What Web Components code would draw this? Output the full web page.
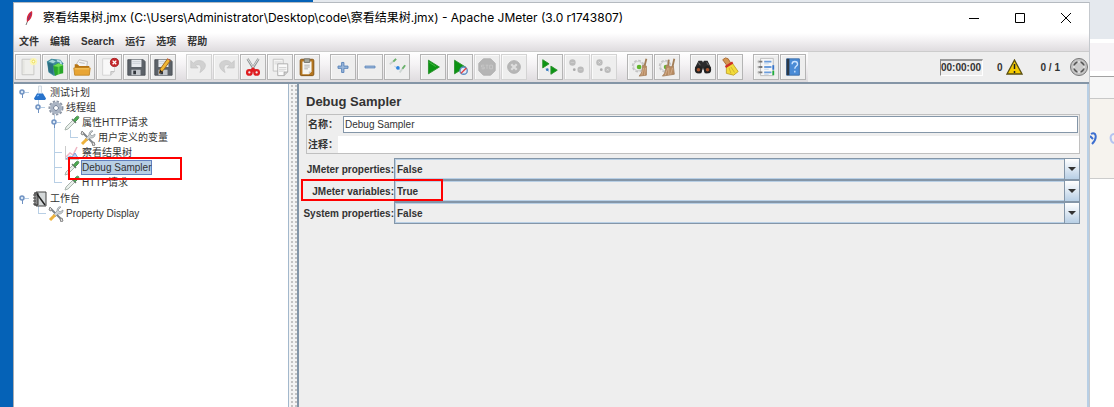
<!DOCTYPE html>
<html lang="zh-CN">
<head>
<meta charset="UTF-8">
<title>Apache JMeter</title>
<style>
  html, body { margin: 0; }
  body {
    font-family: "Liberation Sans", "Noto Sans CJK SC", sans-serif;
    font-size: 10px;
    line-height: 15px;
    color: #333;
    background: #fff;
  }
</style>
</head>
<body>
<desktop-view>
  <app-window heading="察看结果树.jmx (C:\Users\Administrator\Desktop\code\察看结果树.jmx) - Apache JMeter (3.0 r1743807)">
    <menu-bar items="文件,编辑,Search,运行,选项,帮助"></menu-bar>
    <tool-bar></tool-bar>
    <split-pane>
      <div slot="left">
        <tree-node label="测试计划" icon="flask" open root>
          <tree-node label="线程组" icon="gear" open>
            <tree-node label="属性HTTP请求" icon="pipette" open>
              <tree-node label="用户定义的变量" icon="tools"></tree-node>
            </tree-node>
            <tree-node label="察看结果树" icon="chart"></tree-node>
            <tree-node label="Debug Sampler" icon="pipette" selected></tree-node>
            <tree-node label="HTTP请求" icon="pipette"></tree-node>
          </tree-node>
        </tree-node>
        <tree-node label="工作台" icon="bench" open root>
          <tree-node label="Property Display" icon="tools"></tree-node>
        </tree-node>
      </div>
      <sampler-form></sampler-form>
    </split-pane>
  </app-window>
  <back-window slot="behind"></back-window>
</desktop-view>

<script>
  const cog = '<circle cx="9" cy="10" r="6" fill="#e4e4e4" stroke="#c4c4c4" stroke-width="2" stroke-dasharray="3 1.6"/><circle cx="9" cy="10" r="5" fill="#eee" stroke="#ccc"/><circle cx="10" cy="11" r="2.6" fill="#61b52c"/>';
  const floppy = '<path d="M2 3h17l2 2v15H2z" fill="#5b6168" stroke="#4b5056"/><path d="M6 3h11v8H6z" fill="#e8ebef"/><path d="M7 5h9M7 7h9" stroke="#c9ced5"/><path d="M6 14h10v6H6z" fill="#c3c7cc"/><path d="M8 15h3v4H8z" fill="#30343a"/>';

  // toolbar icons, 22 x 22
  const toolIcons = {
    new: '<path d="M4.500 2.500h13v17h-13z" fill="#efefec" stroke="#c6c6c2"/><path d="M6.500 4v14" stroke="#dededa"/><circle cx="17" cy="5" r="4" fill="#fff7a8" opacity=".8"/><circle cx="17" cy="5" r="1.500" fill="#fffde0" stroke="#e8d953"/>',
    templates: '<path d="M2 5l5-3 10 1 3 4-2 9-8 5-6-4z" fill="#418b9c"/><path d="M3 6l6 2v11l-5-3z" fill="#2c6f82"/><path d="M4 5l4-2 4 2-3 2z" fill="#a7d6dc"/><path d="M13 4l4 1 1 4" fill="none" stroke="#b2dbe5" stroke-width="2"/><path d="M9 10l5-3 6 2v9l-5 1-4 2z" fill="#2aa62b"/><path d="M9 10l6 1 5-2-5-2z" fill="#72df52"/><path d="M15 11v8" stroke="#53cf45" stroke-width="2"/>',
    open: '<path d="M4 9L8 3l9 2-1 8H4z" fill="#f4f4f4" stroke="#bbb"/><path d="M8 6l6 1" stroke="#bbb"/><path d="M3 8h3l2 2h11v9H3z" fill="#b87513"/><path d="M2 12h18l-1 8H3z" fill="#e8a534" stroke="#c48a2a"/><path d="M3 13h16" stroke="#ffd370"/>',
    close: '<path d="M4 2h13v14l-4 4H4z" fill="#f8f8f8" stroke="#d2d2d2"/><path d="M13 20v-4h4" fill="#ddd" stroke="#bbb"/><circle cx="17" cy="6" r="4.500" fill="#c6262a" stroke="#a62224"/><path d="M15 4l4 4m0-4l-4 4" stroke="#fff" stroke-width="1.500"/>',
    save: floppy,
    saveas: floppy + '<path d="M7 18l1-5L16 2l3 2-8 11z" fill="#f2b734" stroke="#99631b"/><path d="M7 18l1-4 2 2z" fill="#222"/><path d="M16 2l3 2" stroke="#c55"/>',
    undo: '<path d="M2 4v8h8L7 9c5-2 8 1 5 8 9-5 7-13-1-13-3 0-5 1-6 3z" fill="#d1d1d1" stroke="#c8c8c8"/>',
    redo: '<path d="M20 4v8h-8l3-3c-5-2-8 1-5 8-9-5-7-13 1-13 3 0 5 1 6 3z" fill="#d1d1d1" stroke="#c8c8c8"/>',
    cut: '<path d="M5 2l8 13M17 2L9 15" stroke="#8d9292" stroke-width="2.600"/><path d="M5 2l8 12M17 2L9 14" stroke="#e4e8e8"/><circle cx="7" cy="17" r="2.500" fill="none" stroke="#df1d20" stroke-width="2.500"/><circle cx="15" cy="17" r="2.500" fill="none" stroke="#df1d20" stroke-width="2.500"/><path d="M8 14l3-3 3 3-3 3z" fill="#df1d20"/>',
    copy: '<path d="M3.500 2.500h11v13h-11z" fill="#f5f5f4" stroke="#c0c0c0"/><path d="M5 5.500h8M5 7.500h8" stroke="#d5d5d5"/><path d="M8.500 7.500h11v9l-4 4h-7z" fill="#fafafa" stroke="#aaa"/><path d="M10 11.500h8M10 13.500h8M10 15.500h6" stroke="#ccc"/><path d="M15.500 20.500v-4h4" fill="#ccc" stroke="#aaa"/>',
    paste: '<rect x="3.500" y="2.500" width="15" height="18" rx="1.500" fill="#b5761f" stroke="#80500f"/><path d="M6 5h10v11l-3 3H6z" fill="#f6f6f2"/><path d="M8 2h6v4H8z" fill="#a5a79d" stroke="#73736c"/><path d="M8 9h6M8 11h6M8 13h4" stroke="#aaa"/><path d="M13 19v-3h3" fill="#ccc"/>',
    plus: '<path d="M9.500 6v4h-4v2.500h4v4.500h2.500v-4.500h4.500v-2.500H12V6z" fill="#9ab7da" stroke="#5681b8"/>',
    minus: '<path d="M5.500 10h11v2h-11z" fill="#9ab7da" stroke="#6089bd"/>',
    toggle: '<path d="M3 8l7-6M14 17l5-7" stroke="#cdd5d2" stroke-width="2"/><path d="M7 5l3-3M17 13l3-4" stroke="#6ab26a" stroke-width="2"/><path d="M8 10l6 4" stroke="#9fc9ed"/><circle cx="12" cy="12" r="2" fill="#2c83df"/>',
    start: '<path d="M6 3.500l12 7.500-12 7.500z" fill="#0b9413" stroke="#2b912d"/><path d="M7 6l7 4.500" stroke="#45bd43"/>',
    startnow: '<path d="M5 3.500l12 7.500-12 7.500z" fill="#0b9413" stroke="#2b912d"/><circle cx="15" cy="15" r="4" fill="#e2ebf7" stroke="#5f8dc3" stroke-width="1.500"/><path d="M12 18l6-6" stroke="#e03a3a" stroke-width="1.500"/>',
    stop: '<path d="M7 2h8l5 5v8l-5 5H7l-5-5V7z" fill="#b5b5b5" stroke="#b0b0b0"/><path d="M5 9h3M5 9v2h3v2H5M9.500 9h3M11 9v4M14 9h3v4h-3z" fill="none" stroke="#c8c8c8"/>',
    shutdown: '<circle cx="11" cy="11" r="7" fill="#b6b6b6" stroke="#b0b0b0"/><path d="M8 8l6 6m0-6l-6 6" stroke="#ddd" stroke-width="2.500"/>',
    remotestart: '<path d="M3 3l7 4.500L3 12zM12 10l7 4.500-7 4.500z" fill="#0b9413" stroke="#2b912d"/><path d="M6 13l4 3" stroke="#84b6e3"/><circle cx="8" cy="14" r="1.500" fill="#397cc1"/>',
    remotestop: '<circle cx="6" cy="6" r="3.500" fill="#bbb"/><circle cx="15" cy="14" r="3.500" fill="#bbb"/><circle cx="8" cy="14" r="1.500" fill="#aaa"/><path d="M4 6h4M13 14h4" stroke="#ccc"/>',
    remoteshut: '<circle cx="6" cy="6" r="3.500" fill="#bbb"/><circle cx="15" cy="14" r="3.500" fill="#bbb"/><circle cx="8" cy="14" r="1.500" fill="#aaa"/><path d="M5 5l2 2m0-2L5 7M14 13l2 2m0-2l-2 2" stroke="#e1e1e1"/>',
    clear: cog + '<path d="M18 2l-2 8" stroke="#a17d56" stroke-width="2"/><path d="M14 9l4 1v10l-8 1c3-3 4-7 4-12z" fill="#b88b61" stroke="#a98561"/><path d="M15 12l-2 8m4-8l-1 8" stroke="#d4b08d"/>',
    clearall: cog + '<path d="M13 3l-1 8M19 2l-2 9" stroke="#a17d56" stroke-width="2"/><path d="M10 9l4 1 1 1 3-1 1 9-13 2c3-3 4-7 4-12z" fill="#b88b61" stroke="#a98561"/><path d="M12 12l-3 8m8-8l-2 7m-2-7v8" stroke="#d4b08d"/>',
    search: '<path d="M6 4h4l1 2 1-2h4l4 8-4 6h-3l-2-6-2 6H5l-3-6z" fill="#2b2b2c"/><circle cx="6" cy="14" r="3" fill="#a7532d" stroke="#222" stroke-width="2"/><circle cx="16" cy="14" r="3" fill="#a7532d" stroke="#222" stroke-width="2"/><path d="M6 6l2 3M15 6l2 3" stroke="#777"/>',
    reset: '<path d="M3 3l3-2 3 1 3 5-4 3z" fill="#d49752" stroke="#a9682e"/><path d="M7 10l6-4 7 10-5 4-8-2z" fill="#f2dc3b" stroke="#c1a12a"/><path d="M6 11l8-5" stroke="#cf3027" stroke-width="2.500"/><path d="M10 12l2 6m0-7l4 6" stroke="#cfb02c"/>',
    functions: '<path d="M5 1.500h14v19H5z" fill="#f7f7f7" stroke="#bbb"/><path d="M9 5h8M9 11h8M9 17h8" stroke="#6c9ddb" stroke-width="2"/><path d="M9 7.500h5M9 13.500h5M9 19h5" stroke="#bcd2e9"/><path d="M2 5h5M2 11h5M2 17h5" stroke="#777" stroke-width="2"/><path d="M3 4v3m0 3v3m0 3v3" stroke="#ccc"/><path d="M19 9v5" stroke="#3574cc" stroke-width="2"/><path d="M19 15v5" stroke="#20ac3b" stroke-width="2"/>',
    help: '<path d="M4 2h14v18H4z" fill="#4a8bd6" stroke="#3a6ca8"/><path d="M4 2h3v18H4z" fill="#2c3947"/><path d="M10 8c0-4 6-4 6 0 0 2-3 2-3 5m0 2v2" fill="none" stroke="#cce4ff" stroke-width="1.500"/>'
  };

  // tree icons, 16 x 16
  const treeIcons = {
    flask: '<path d="M6.500 1h3v6l4 7H2.500l4-7z" fill="#f3f7fb" stroke="#d0d9e2"/><path d="M5 8.500h6l3 5-1 1.500H3l-1-1.500z" fill="#2773cc"/><path d="M5 11l2-1" stroke="#8bc3ff"/>',
    gear: '<circle cx="8" cy="8" r="6.500" stroke="#8d96a5" stroke-width="2" stroke-dasharray="2.400 1.400"/><circle cx="8" cy="8" r="4.500" fill="#fff" stroke="#aab4c3" stroke-width="3"/><circle cx="8" cy="8" r="2.500" fill="#fff" stroke="#66758e"/>',
    pipette: '<path d="M1 15l1-3 7-7 2 2-7 7z" fill="#e9efeb" stroke="#a9b5ad"/><path d="M8 4l4 4" stroke="#6d7a72" stroke-width="1.500"/><path d="M9.500 5L12 2c2-2 4 0 2 2l-3 3z" fill="#4aad4f" stroke="#528a58"/>',
    tools: '<path d="M3 3l10 10" stroke="#7e848a" stroke-width="2"/><path d="M2 1l2 2-1 2-2-1zM12 13l2-1 1 3-2 1z" fill="#ddd" stroke="#888"/><path d="M13 1l-3 3 2 2 3-2c0 4-3 4-5 4l-3 3-2-2 4-4c0-3 2-5 4-4z" fill="#cdd2d5" stroke="#8a9095" stroke-width=".7"/><path d="M7 9l-5 5" stroke="#edb23c" stroke-width="3"/>',
    chart: '<path d="M1.500 1v13.500H15" fill="none" stroke="#ccc"/><path d="M2 12l4-4 3 2 4-8" fill="none" stroke="#efb6c4" stroke-width="1.500"/><path d="M2 14l4-3 2 1 3-4 3 5" fill="#bdd2f0" stroke="#7ba0dc"/>',
    bench: '<path d="M4 1h10v14H4z" fill="#d4d8d9" stroke="#444"/><path d="M2 2h4v12H2" fill="#888" stroke="#333"/><path d="M5 3l8 11" stroke="#222" stroke-width="1.500"/><path d="M1 4h3M1 7h3M1 10h3M1 13h3" stroke="#444"/>'
  };

  const svg = (body, size, attrs = '') =>
    `<svg width="${size}" height="${size}" viewBox="0 0 ${size} ${size}" fill="none" aria-hidden="true" ${attrs}>${body}</svg>`;

  class DesktopView extends HTMLElement {
    constructor() {
      super();
      this.attachShadow({ mode: 'open' }).innerHTML = `
        <style>
          :host {
            display: grid;
            grid-template-columns: 13px 1fr 24px;
            min-height: 100vh;
            background: linear-gradient(90deg, #0562b7 313px, #e5e9ee 313px);
          }
          .front { display: grid; padding-top: 2px; min-width: 0; }
        </style>
        <div></div>
        <div class="front"><slot></slot></div>
        <slot name="behind"></slot>`;
    }
  }

  class BackWindow extends HTMLElement {
    constructor() {
      super();
      this.attachShadow({ mode: 'open' }).innerHTML = `
        <style>
          :host { display: flex; flex-direction: column; background: #fff; overflow: hidden; }
          .tabs { height: 39px; background: #e5e9ee; }
          .address { height: 28px; margin: 4px 0 5px; background: #f6f3f6; }
          .links { height: 21px; background: #f6f6f6; border-top: 1px solid #a2a2a2; border-bottom: 1px solid #c8c8c8; }
          .ribbon { display: flex; align-items: center; height: 79px; background: #f6f3ee; border-bottom: 1px solid #ccc; }
        </style>
        <div class="tabs"></div>
        <div class="address"></div>
        <div class="links"></div>
        <div class="ribbon">
          <svg width="24" height="16" fill="none" stroke-width="2"><path d="M1 3c5-3 7 4 1 10M0 5l3 3" stroke="#3d6fd0"/><path d="M24 3c-5 0-4 8 0 9" stroke="#b4c3f1"/></svg>
        </div>`;
    }
  }

  class AppWindow extends HTMLElement {
    connectedCallback() {
      this.attachShadow({ mode: 'open' }).innerHTML = `
        <style>
          :host {
            display: flex;
            flex-direction: column;
            min-width: 0;
            background: #eee;
            border-top: 1px solid #b5bac0;
            border-left: 1px solid #a9adb2;
            border-right: 1px solid #c5c9ce;
            box-sizing: border-box;
          }
          header { display: flex; align-items: center; height: 30px; background: #fff; }
          header > svg { flex: none; margin-left: 6px; }
          h1 {
            flex: 1;
            margin: 0 0 0 7px;
            font: 12px/16px Inter, "Noto Sans CJK SC", sans-serif;
            color: #000;
            white-space: nowrap;
            overflow: hidden;
          }
          button { width: 46px; height: 30px; padding: 0; border: 0; background: none; }
          button svg { display: block; margin: auto; }
          ::slotted(split-pane) { flex: 1; }
        </style>
        <header>
          ${svg('<path d="M6 15l2-5" stroke="#777"/><path d="M7 12c-1-5 1-9 5-11 1 4-1 9-5 11z" fill="#d7283b"/><path d="M8 10l3-7" stroke="#803078"/>', 16)}
          <h1>${this.getAttribute('heading')}</h1>
          <button aria-label="Minimize">${svg('<path d="M0 5.500h10" stroke="#000"/>', 10)}</button>
          <button aria-label="Maximize">${svg('<path d="M.5.500h9v9h-9z" stroke="#000"/>', 10)}</button>
          <button aria-label="Close">${svg('<path d="M0 0l10 10M10 0L0 10" stroke="#000"/>', 10)}</button>
        </header>
        <slot></slot>`;
    }
  }

  class MenuBar extends HTMLElement {
    connectedCallback() {
      const items = this.getAttribute('items').split(',');
      this.attachShadow({ mode: 'open' }).innerHTML = `
        <style>
          :host {
            display: flex;
            gap: 11px;
            height: 18px;
            padding: 0 5px;
            background: linear-gradient(#fff, #f3f1f3 40%, #dfdcdf);
            border-bottom: 1px solid #ccc;
          }
          button {
            padding: 0;
            border: 0;
            background: none;
            font: bold 10px/18px "Liberation Sans", "Noto Sans CJK SC", sans-serif;
            color: #333;
          }
        </style>
        ${items.map(item => `<button>${item}</button>`).join('')}`;
    }
  }

  class ToolButton extends HTMLElement {
    connectedCallback() {
      const icon = this.getAttribute('icon');
      const disabled = this.hasAttribute('disabled') ? 'disabled' : '';
      this.attachShadow({ mode: 'open' }).innerHTML = `
        <style>
          :host { display: block; }
          button {
            display: grid;
            place-items: center;
            width: 26px;
            height: 26px;
            padding: 0;
            border: 1px solid #b4b4b4;
            background: #eee;
            box-shadow: inset 1px 1px #fafafa;
          }
          button:disabled { border-color: #d3d3d3; }
        </style>
        <button aria-label="${icon}" ${disabled}>
          ${svg(toolIcons[icon], 20).replace('0 0 20 20', '0 0 22 22')}
        </button>`;
    }
  }

  class ToolBar extends HTMLElement {
    constructor() {
      super();
      // a leading "-" marks a disabled button
      const groups = [
        ['new', 'templates', 'open', 'close', 'save', 'saveas'],
        ['-undo', '-redo', 'cut', 'copy', 'paste'],
        ['plus', 'minus', 'toggle'],
        ['start', 'startnow', '-stop', '-shutdown'],
        ['remotestart', '-remotestop', '-remoteshut'],
        ['clear', 'clearall'],
        ['search', 'reset'],
        ['functions', 'help']
      ];
      const button = name => name.startsWith('-')
        ? `<tool-button icon="${name.slice(1)}" disabled></tool-button>`
        : `<tool-button icon="${name}"></tool-button>`;

      this.attachShadow({ mode: 'open' }).innerHTML = `
        <style>
          :host {
            display: flex;
            align-items: center;
            justify-content: space-between;
            height: 30px;
            background: #eee;
            border-bottom: 2px solid #8495a6;
          }
          .tools, .group, .status { display: flex; align-items: center; }
          .tools {
            gap: 10px;
            height: 30px;
            padding: 0 2px 0 1px;
            background: linear-gradient(90deg, #fff, #e6e3e6 10px, #e6e3e6);
            background: linear-gradient(#fff, #f5f3f5 40%, #dedbde);
          }
          .group { gap: 1px; }
          .status { font-weight: bold; }
          input {
            box-sizing: border-box;
            width: 43px;
            height: 17px;
            margin-right: 14px;
            padding: 0;
            border: 1px solid #fff;
            border-top: 2px solid #999;
            border-left-color: #888;
            background: #eee;
            font: bold 10px/14px "Liberation Sans", sans-serif;
            color: #333;
          }
          .warn { margin: 0 18px 0 3px; }
          .light { margin-left: 9px; }
        </style>
        <div class="tools">
          ${groups.map(g => `<div class="group">${g.map(button).join('')}</div>`).join('')}
        </div>
        <div class="status">
          <input value="00:00:00" aria-label="Elapsed" readonly>
          <span>0</span>
          ${svg('<path d="M8.500 1L16 15H1z" fill="#f5cb00" stroke="#5a4f10" stroke-width="1.300"/><path d="M8.500 5v5m0 2v2" stroke="#222" stroke-width="1.500"/>', 17, 'class="warn"')}
          <span>0 / 1</span>
          ${svg('<circle cx="10" cy="10" r="8.500" fill="#c4c4c4" stroke="#777"/><circle cx="10" cy="10" r="5" stroke="#555" stroke-width="2"/><path d="M10 4v12M4 10h12" stroke="#ddd" stroke-width="3"/><circle cx="10" cy="10" r="4" fill="#ccc"/>', 20, 'class="light"')}
        </div>`;
    }
  }

  class SplitPane extends HTMLElement {
    constructor() {
      super();
      this.attachShadow({ mode: 'open' }).innerHTML = `
        <style>
          :host { display: grid; grid-template-columns: 275px 8px 1fr; }
          .tree { padding: 1px 2px; background: #fff; border-right: 1px solid #a3b8cc; }
          .divider {
            background:
              radial-gradient(circle, #c4c4c4 1px, transparent 1px) 1px 0 / 4px 4px,
              #f4f4f4;
          }
          .main {
            min-width: 0;
            padding: 10px 7px 9px 7px;
            border-left: 2px solid #8295a8;
            border-right: 2px solid #b8cfe5;
          }
        </style>
        <div class="tree"><slot name="left"></slot></div>
        <div class="divider"></div>
        <div class="main"><slot></slot></div>`;
    }
  }

  class TreeNode extends HTMLElement {
    connectedCallback() {
      const handle = this.hasAttribute('open')
        ? '<circle cx="6" cy="7" r="2" fill="#d8e6f5" stroke="#6f92c2" stroke-width="1.500"/><path d="M9 7.500h4" stroke="#b8cfe5"/><path d="M6.500 9v4" stroke="#6f92c2"/>'
        : '<path d="M6 7.500h8" stroke="#b8cfe5"/>';
      this.attachShadow({ mode: 'open' }).innerHTML = `
        <style>
          :host {
            display: block;
            background: linear-gradient(#b8cfe5, #b8cfe5) 6px 0 / 1px 100% no-repeat;
          }
          :host(:last-child) { background-size: 1px 8px; }
          :host([root]) { margin-bottom: 1px; background: none; }
          .row { display: flex; align-items: center; height: 15px; white-space: nowrap; }
          svg { flex: none; }
          .label { margin-left: 1px; padding: 0 1px; line-height: 15px; position: relative; }
          :host([selected]) .label { background: #b8cfe5; box-shadow: inset 0 0 0 1px #6382bf; }
          .children { padding-left: 16px; }
          .mark {
            position: absolute;
            left: -13px;
            top: -3px;
            width: 110px;
            height: 19px;
            border: 2px solid #f00;
            z-index: 1;
          }
        </style>
        <div class="row">
          ${svg(handle, 16)}
          ${svg(treeIcons[this.getAttribute('icon')], 16)}
          <span class="label">${this.getAttribute('label')}${this.hasAttribute('selected') ? '<i class="mark"></i>' : ''}</span>
        </div>
        <div class="children"><slot></slot></div>`;
    }
  }

  class ComboField extends HTMLElement {
    connectedCallback() {
      const value = this.getAttribute('value');
      const other = value === 'True' ? 'False' : 'True';
      this.attachShadow({ mode: 'open' }).innerHTML = `
        <style>
          :host {
            display: grid;
            grid-template-columns: 88px 1fr;
            align-items: center;
            position: relative;
            font-weight: bold;
          }
          label { justify-self: end; white-space: nowrap; }
          .box { display: grid; grid-template-columns: 1fr 16px; }
          select {
            grid-area: 1 / 1 / 2 / 3;
            appearance: none;
            height: 22px;
            padding: 0 2px;
            border: 1px solid #8496a8;
            border-radius: 0;
            box-shadow: inset 0 0 0 1px #b8cfe5;
            background: #eee;
            font: bold 10px/15px "Liberation Sans", sans-serif;
            color: #333;
          }
          .arrow {
            grid-area: 1 / 2 / 2 / 3;
            display: grid;
            place-items: center;
            margin: 1px 1px 1px 0;
            border-left: 1px solid #8496a8;
            background: linear-gradient(#fff, #b8cfe5);
            pointer-events: none;
          }
          .mark {
            position: absolute;
            left: -5px;
            top: -1px;
            width: 138px;
            height: 18px;
            border: 2px solid #f00;
            z-index: 1;
          }
        </style>
        <label for="combo">${this.getAttribute('label')}</label>
        <div class="box">
          <select id="combo"><option>${value}</option><option>${other}</option></select>
          <span class="arrow">${svg('<path d="M1 3h8L5 7z" fill="#333"/>', 10)}</span>
        </div>
        ${this.hasAttribute('marked') ? '<i class="mark"></i>' : ''}`;
    }
  }

  class SamplerForm extends HTMLElement {
    constructor() {
      super();
      this.attachShadow({ mode: 'open' }).innerHTML = `
        <style>
          :host { display: block; }
          h2 { margin: 0 0 4px; font-size: 13px; line-height: 16px; }
          .info { display: grid; gap: 3px; margin-bottom: 4px; padding: 1px 0 0 1px; border: 1px solid #c0c0c0; }
          .line { display: flex; align-items: center; }
          .line label { width: 30px; font-weight: bold; white-space: nowrap; }
          input {
            flex: 1;
            box-sizing: border-box;
            min-width: 0;
            height: 17px;
            padding: 0 1px;
            border: 0;
            background: #fff;
            font: 10px/15px "Liberation Sans", "Noto Sans CJK SC", sans-serif;
            color: #333;
          }
          #name { margin: 0 1px 0 5px; border: 1px solid #8496a8; }
        </style>
        <h2>Debug Sampler</h2>
        <div class="info">
          <div class="line"><label for="name">名称：</label><input id="name" value="Debug Sampler"></div>
          <div class="line"><label for="comment">注释：</label><input id="comment"></div>
        </div>
        <combo-field label="JMeter properties:" value="False"></combo-field>
        <combo-field label="JMeter variables:" value="True" marked></combo-field>
        <combo-field label="System properties:" value="False"></combo-field>`;
    }
  }

  customElements.define('desktop-view', DesktopView);
  customElements.define('back-window', BackWindow);
  customElements.define('app-window', AppWindow);
  customElements.define('menu-bar', MenuBar);
  customElements.define('tool-button', ToolButton);
  customElements.define('tool-bar', ToolBar);
  customElements.define('split-pane', SplitPane);
  customElements.define('tree-node', TreeNode);
  customElements.define('combo-field', ComboField);
  customElements.define('sampler-form', SamplerForm);
</script>
</body>
</html>
